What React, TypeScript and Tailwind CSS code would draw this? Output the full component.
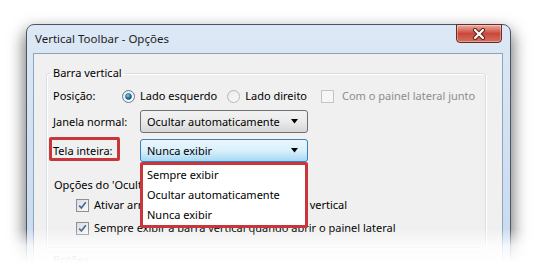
import React from 'react';

function Radio({ checked }: { checked?: boolean }) {
  return (
    <svg width="13" height="13" viewBox="0 0 13 13" className="shrink-0">
      <defs>
        <linearGradient id={checked ? 'rg1' : 'rg0'} x1="0" y1="0" x2="1" y2="1">
          <stop offset="0" stopColor="#e6e6e6" />
          <stop offset="1" stopColor="#fdfdfd" />
        </linearGradient>
        <radialGradient id="dot" cx="0.4" cy="0.35" r="0.7">
          <stop offset="0" stopColor="#8fd6f4" />
          <stop offset="0.5" stopColor="#1f84b8" />
          <stop offset="1" stopColor="#0d3d5b" />
        </radialGradient>
      </defs>
      <circle cx="6.5" cy="6.5" r="6" fill={`url(#${checked ? 'rg1' : 'rg0'})`} stroke={checked ? '#5c7d93' : '#b4b6b8'} />
      {checked && <circle cx="6.5" cy="6.5" r="3" fill="url(#dot)" stroke="#2b5f7d" strokeWidth="0.6" />}
    </svg>
  );
}

function Check({ checked, disabled }: { checked?: boolean; disabled?: boolean }) {
  return (
    <span
      className={`w-[13px] h-[13px] shrink-0 border flex items-center justify-center ${
        disabled
          ? 'border-[#c4c4c4] bg-[#f6f6f6]'
          : 'border-[#8e8f8f] bg-gradient-to-br from-[#d8dde4] to-[#f8f9fa]'
      }`}
    >
      {checked && (
        <svg width="9" height="9" viewBox="0 0 9 9">
          <path d="M1.2 4.6 L3.4 7 L7.8 1.2" fill="none" stroke="#4a6590" strokeWidth="1.6" />
        </svg>
      )}
    </span>
  );
}

function Select({ value, focused, children }: { value: string; focused?: boolean; children?: React.ReactNode }) {
  return (
    <div
      className={`relative w-[168px] h-[23px] rounded-[3px] border flex items-center pl-[6px] pr-[8px] ${
        focused
          ? 'border-[#3c7fb1] bg-gradient-to-b from-[#eaf6fd] via-[#d9f0fc] to-[#a7d9f5]'
          : 'border-[#707070] bg-gradient-to-b from-[#f2f2f2] via-[#ebebeb] to-[#d6d6d6]'
      }`}
    >
      <span className="flex-1">{value}</span>
      <svg width="8" height="5" viewBox="0 0 8 5">
        <path d="M0 0 H7 L3.5 4.5 Z" fill="#000" />
      </svg>
      {children}
    </div>
  );
}

export default function App() {
  return (
    <div className="relative w-[549px] h-[263px] overflow-hidden bg-white pl-[26px] pt-[24px] font-['Noto_Sans',sans-serif] text-[11px] leading-[16px] text-black whitespace-nowrap">
      <div className="w-[485px] h-[300px] rounded-t-[8px] border border-[#4a5663] bg-gradient-to-b from-[#dce8f5] via-[#cfdff1] to-[#c4d7ed] shadow-[0_8px_16px_2px_rgba(0,0,0,0.55)] flex flex-col">
        {/* title bar */}
        <div className="relative h-[28px] shrink-0 flex items-center pl-[8px]">
          <span className="text-[#1e1e1e] text-[11.5px]">Vertical Toolbar - Opções</span>
          <div className="absolute right-[8px] top-[-1px] w-[46px] h-[19px] rounded-b-[4px] border border-[#6d2a22] bg-gradient-to-b from-[#e7aea3] via-[#c9473a] to-[#d3705d] flex items-center justify-center shadow-[inset_0_0_0_1px_rgba(255,255,255,0.35)]">
            <svg width="14" height="12" viewBox="0 0 14 12">
              <path d="M3 2 L11 10 M11 2 L3 10" stroke="#5a1e16" strokeWidth="4" strokeLinecap="round" />
              <path d="M3 2 L11 10 M11 2 L3 10" stroke="#fff" strokeWidth="2.2" strokeLinecap="round" />
            </svg>
          </div>
        </div>

        {/* client area */}
        <div className="flex-1 ml-[6px] mr-[7px] border border-[#8ea4bd] bg-[#f0f0f0] pt-[11px] pl-[12px]">
          <fieldset className="w-[440px] border border-[#d5dfe5] rounded-[3px] shadow-[inset_1px_1px_0_#fff,1px_1px_0_#fff] pl-[6px] pb-[10px]">
            <legend className="-ml-[3px] px-[3px]">Barra vertical</legend>

            <div className="flex items-center h-[20px] mt-[5px]">
              <span className="w-[69px]">Posição:</span>
              <Radio checked />
              <span className="ml-[5px]">Lado esquerdo</span>
              <span className="ml-[10px]"><Radio /></span>
              <span className="ml-[5px]">Lado direito</span>
              <span className="ml-[14px]"><Check disabled /></span>
              <span className="ml-[8px] text-[#8d8d8d]">Com o painel lateral junto</span>
            </div>

            <div className="flex items-center mt-[4px]">
              <span className="w-[87px]">Janela normal:</span>
              <Select value="Ocultar automaticamente" />
            </div>

            <div className="flex items-center mt-[6px]">
              <span className="relative w-[87px]">
                Tela inteira:
                <span className="absolute left-[-4px] top-[-6px] w-[71px] h-[24px] border-[3px] border-[#c8363c] rounded-[2px]" />
              </span>
              <Select value="Nunca exibir" focused>
                <div className="absolute left-[-1px] top-[22px] w-[168px] h-[66px] z-10 bg-white border-[3px] border-[#c8363c] rounded-[2px] flex flex-col pl-[4px]">
                  <span className="h-[21px] flex items-center">Sempre exibir</span>
                  <span className="h-[21px] flex items-center">Ocultar automaticamente</span>
                  <span className="h-[21px] flex items-center">Nunca exibir</span>
                </div>
              </Select>
            </div>

            <div className="mt-[15px] pl-[1px]">Opções do 'Ocultar automaticamente'</div>
            <div className="flex items-center gap-[5px] pl-[23px] mt-[3px] h-[18px]">
              <Check checked />
              <span>Ativar arraste do mouse para exibir barra vertical</span>
            </div>
            <div className="flex items-center gap-[5px] pl-[23px] mt-[5px] h-[18px]">
              <Check checked />
              <span>Sempre exibir a barra vertical quando abrir o painel lateral</span>
            </div>
          </fieldset>

          <fieldset className="w-[440px] mt-[4px] border border-[#d5dfe5] rounded-[3px] pl-[6px] h-[30px]">
            <legend className="-ml-[3px] px-[3px]">Botões</legend>
          </fieldset>
        </div>
      </div>

      {/* reflection fade */}
      <div className="absolute left-0 right-0 bottom-0 h-[34px] bg-gradient-to-b from-white/0 via-white/80 to-white" />
    </div>
  );
}
